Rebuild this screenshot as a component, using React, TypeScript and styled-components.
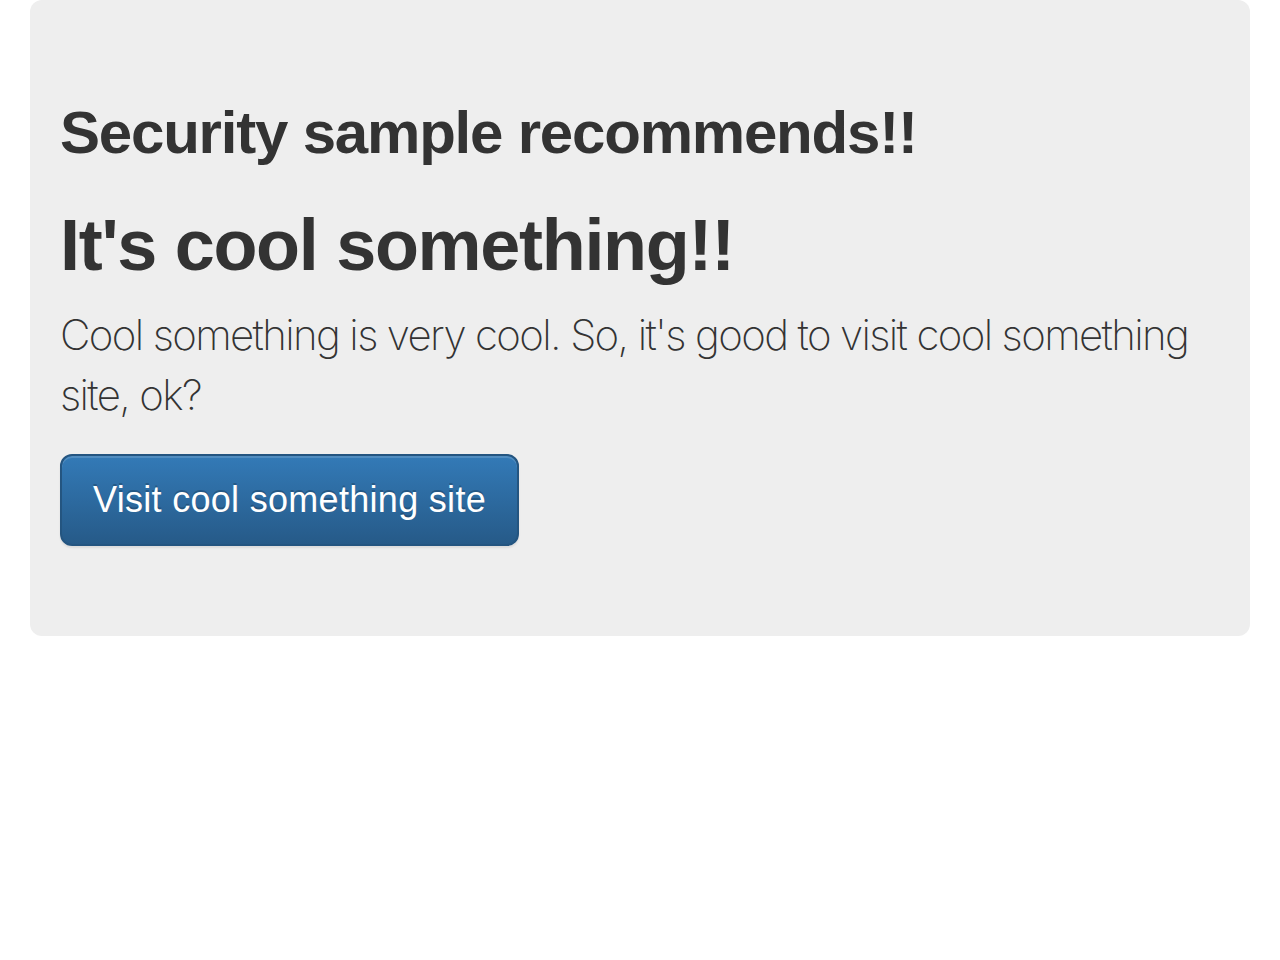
import React from "react";
import styled, { createGlobalStyle } from "styled-components";

const GlobalStyle = createGlobalStyle`
  html, body {
    margin: 0;
    padding: 0;
    background: #ffffff;
  }
  body {
    font-family: "Liberation Sans", Arial, Helvetica, sans-serif;
    font-size: 28px;
    line-height: 1.42857143;
    color: #333333;
  }
  * { box-sizing: border-box; }
`;

const Container = styled.div`
  padding: 0 30px;
`;

const Jumbotron = styled.div`
  background: #eeeeee;
  border-radius: 12px;
  padding: 60px 30px;
  margin-bottom: 60px;
  color: inherit;
`;

const Subtitle = styled.h2`
  margin: 40px 0 20px;
  font-family: "Liberation Sans", Arial, sans-serif;
  font-size: 60px;
  font-weight: 700;
  letter-spacing: -1.2px;
  line-height: 1.1;
  color: #333333;
`;

const Title = styled.h1`
  margin: 40px 0 20px;
  font-family: "Liberation Sans", Arial, sans-serif;
  font-size: 72px;
  font-weight: 700;
  letter-spacing: -1.3px;
  line-height: 1.1;
  color: #333333;
`;

const Lead = styled.p`
  margin: 0 0 29px;
  font-family: Inter, "Liberation Sans", sans-serif;
  font-size: 42px;
  font-weight: 200;
  letter-spacing: -1.65px;
  line-height: 60px;
  color: #333333;
`;

const ButtonRow = styled.div`
  display: flex;
  margin-bottom: 30px;
`;

const PrimaryButton = styled.a`
  display: inline-block;
  padding: 21px 31px;
  font-family: "Liberation Sans", Arial, sans-serif;
  font-size: 36px;
  line-height: 46px;
  font-weight: 400;
  letter-spacing: 0.3px;
  color: #ffffff;
  text-decoration: none;
  text-shadow: 0 -2px 0 rgba(0, 0, 0, 0.2);
  background-image: linear-gradient(to bottom, #337ab7 0%, #265a88 100%);
  border: 2px solid #245580;
  border-radius: 12px;
  box-shadow: inset 0 2px 0 rgba(255, 255, 255, 0.15), 0 2px 2px rgba(0, 0, 0, 0.075);
  cursor: pointer;
`;

export default function App() {
  return (
    <>
      <GlobalStyle />
      <Container>
        <Jumbotron>
          <Subtitle>Security sample recommends!!</Subtitle>
          <Title>It's cool something!!</Title>
          <Lead>
            Cool something is very cool. So, it's good to visit cool something site, ok?
          </Lead>
          <ButtonRow>
            <PrimaryButton href="#">Visit cool something site</PrimaryButton>
          </ButtonRow>
        </Jumbotron>
      </Container>
    </>
  );
}
